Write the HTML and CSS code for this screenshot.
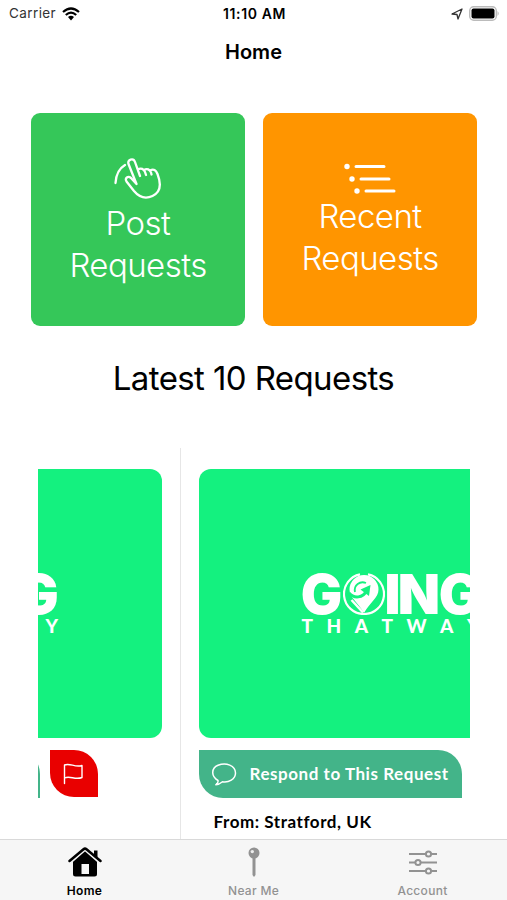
FILE: index.html
```html
<!DOCTYPE html>
<html lang="en">
<head>
<meta charset="utf-8">
<title>Home</title>
<link rel="stylesheet" href="styles.css">
</head>
<body>
<div class="app">
  <div class="status">
    <div class="status-left"><span class="carrier">Carrier</span>
      <svg class="wifi" width="18" height="14" viewBox="0 0 18 14" fill="none" stroke="#000" stroke-width="2.2"><path d="M1 5Q9-2 17 5M3.8 8Q9 3.3 14.2 8"/><path d="M6 10Q9 7.4 12 10L9 13.5Z" fill="#000" stroke="none"/></svg>
    </div>
    <div class="time">11:10 AM</div>
    <div class="status-right">
      <svg width="12" height="12" viewBox="0 0 12 12" fill="none" stroke="#333" stroke-width="1.3" stroke-linejoin="round"><path d="M1 6 11 1 7 11 6 6.5Z"/></svg>
      <svg width="31" height="15" viewBox="0 0 31 15"><rect x=".7" y=".7" width="26.6" height="13.6" rx="4" fill="#fff" stroke="#bbb" stroke-width="1.4"/><rect x="2.5" y="2.5" width="23" height="10" rx="2" fill="#000"/><path d="M28.5 5Q31 7.5 28.5 10Z" fill="#bbb"/></svg>
    </div>
  </div>
  <h1 class="title">Home</h1>
  <div class="tiles">
    <div class="tile post">
      <svg width="48" height="42" viewBox="0 0 48 42" fill="none" stroke="#fff" stroke-width="2.3" stroke-linecap="round" stroke-linejoin="round"><path d="M1.500 25C2 17 5 10.500 11 7M22.500 26 14.500 6C13 1.500 19.500-.5 21 4L26 18M23.700 11.500C27 9.500 30 11 31 14L32 17M30 12C33 10 36 11.500 37 14.500L37.500 16.500M36.300 12.300C39.500 10.500 42 12 43.500 16 47 25 47 34 38.500 38 31 41.500 25 39 20 33L12.500 23.500C10.500 20 14 17.500 17 20L22.500 26"/></svg>
      <span class="tile-text">Post<br>Requests</span>
    </div>
    <div class="tile recent">
      <svg width="52" height="32" viewBox="0 0 52 32" stroke="#fff" stroke-width="3" stroke-linecap="round"><path d="M12 3.500H40M17 16H45M22 28H50"/><g fill="#fff" stroke="none"><circle cx="3" cy="3.500" r="2.700"/><circle cx="8" cy="16" r="2.700"/><circle cx="13" cy="28" r="2.700"/></g></svg>
      <span class="tile-text">Recent<br>Requests</span>
    </div>
  </div>
  <h2 class="latest"><span>Latest 10 Requests</span></h2>
  <div class="carousel">
    <div class="track">
      <article class="item">
        <div class="card"><div class="logo">
          <div class="going"><span class="g">G</span><svg class="pin" viewBox="0 0 42 42"><use href="#mark"/></svg><span class="i">I</span><span class="n">N</span><span class="g">G</span></div>
          <div class="thatway"><span>T</span><span>H</span><span>A</span><span>T</span><span>W</span><span>A</span><span>Y</span></div>
        </div></div>
        <div class="actions"><div class="respond"></div>
          <div class="flag"><svg width="21" height="22" viewBox="0 0 21 22" fill="none" stroke="#fff" stroke-width="1.400" stroke-linecap="round" stroke-linejoin="round"><path d="M1.500 20.500V2C7-.5 12 5 19 2.500V14.500C12 17.500 7 12 1.500 15"/></svg></div>
        </div>
      </article>
      <article class="item next">
        <div class="card"><div class="logo">
          <div class="going"><span class="g">G</span><svg class="pin" viewBox="0 0 42 42"><g id="mark"><path d="M17 1.400A20 20 0 0 0 21 41 20 20 0 0 0 25 1.400" fill="none" stroke="#fff" stroke-width="2.200"/><path d="M21 2A14.500 14.500 0 0 0 6.500 16.500C6.500 25 15 29 21 40 27 29 35.500 25 35.500 16.500A14.500 14.500 0 0 0 21 2Z" fill="#fff"/><path d="M6 20C11 26 20 25 23.500 18" fill="none" stroke="#14f17f" stroke-width="3"/><path d="M17.500 16.500 27.500 12 26 23Z" fill="#14f17f"/><path d="M12 19C10.500 12 17 7.500 23 10" fill="none" stroke="#14f17f" stroke-width="1.800"/><path d="M8.500 27 20 39.500" stroke="#fff" stroke-width="2.500"/></g></svg><span class="i">I</span><span class="n">N</span><span class="g">G</span></div>
          <div class="thatway"><span>T</span><span>H</span><span>A</span><span>T</span><span>W</span><span>A</span><span>Y</span></div>
        </div></div>
        <div class="actions"><div class="respond">
          <svg width="25" height="23" viewBox="0 0 25 23" fill="none" stroke="#fff" stroke-width="1.500" stroke-linejoin="round"><path d="M6 17.500C-1.500 13-.5 5 6 2.300 14-1 23.500 2.500 23.500 10 23.500 16.500 16.500 19.800 10.500 18.800 8.500 20.500 6 21.800 3.800 21.800 5.500 20.500 6.300 19 6 17.500Z"/></svg>
          <span>Respond to This Request</span></div>
        </div>
        <p class="from">From: Stratford, UK</p>
      </article>
    </div>
  </div>
  <nav class="tabs">
    <div class="tab active">
      <svg width="34" height="30" viewBox="0 0 34 30"><path d="M5 13.500 17 3.500 29 13.500V27Q29 29.500 26.500 29.500H7.500Q5 29.500 5 27Z"/><path d="M1.500 14.500 15.500 2.300Q17 1 18.500 2.300L32.500 14.500" fill="none" stroke="#f6f6f6" stroke-width="5"/><path d="M1.500 14 15.500 2.300Q17 1 18.500 2.300L32.500 14" fill="none" stroke="#000" stroke-width="2.500" stroke-linecap="round"/><path d="M26 3.500H29.500V11.500L26 8.500Z"/><path d="M13.500 17H21V27H13.500Z" fill="#f6f6f6"/></svg>
      <span>Home</span>
    </div>
    <div class="tab">
      <svg width="14" height="30" viewBox="0 0 14 30" fill="#929292"><path d="M5.500 9H8.500V28L7 30 5.500 28Z"/><circle cx="7" cy="6" r="5.500"/><circle cx="5.300" cy="4.600" r="1.700" fill="#eee"/></svg>
      <span>Near Me</span>
    </div>
    <div class="tab">
      <svg width="28" height="30" viewBox="0 0 28 30" fill="#f6f6f6" stroke="#929292" stroke-width="2"><path d="M0 7H28M0 15.500H28M0 24H28"/><circle cx="19.500" cy="7" r="2.600"/><circle cx="9" cy="15.500" r="2.600"/><circle cx="19.500" cy="24" r="2.600"/></svg>
      <span>Account</span>
    </div>
  </nav>
</div>
</body>
</html>
```
FILE: styles.css
```css
* { box-sizing: border-box; }
body { margin: 0; background: #fff; color: #000; font-family: Inter, sans-serif; }
.app { width: 507px; height: 900px; overflow: hidden; display: flex; flex-direction: column; }
svg { display: block; flex: none; }
.status { height: 27px; display: grid; grid-template-columns: 1fr auto 1fr; align-items: center; padding: 0 7px 0 9px; font-size: 13.5px; line-height: 27px; }
.status-left, .status-right { display: flex; align-items: center; gap: 6px; }
.carrier { color: #333; letter-spacing: .4px; }
.status-right { justify-content: flex-end; }
.time { font-weight: 600; font-size: 14px; letter-spacing: .6px; }
.title { margin: 0; height: 86px; font-size: 20px; line-height: 50px; font-weight: 600; text-align: center; }
.tiles { display: flex; gap: 18px; padding-left: 31px; height: 213px; }
.tile { width: 214px; height: 213px; border-radius: 9px; display: flex; flex-direction: column; align-items: center; color: #fff; }
.post { background: #35c759; padding-top: 45px; }
.recent { background: #ff9500; padding-top: 50px; }
.tile-text { font-size: 33px; line-height: 42px; font-weight: 350; letter-spacing: -.55px; text-align: center; }
.post .tile-text { margin-top: 2px; }
.latest { margin: 0; height: 122px; padding-top: 31px; font-size: 33px; line-height: 42px; font-weight: 400; text-align: center; letter-spacing: -.6px; white-space: nowrap; }
.carousel { margin-left: 38px; width: 432px; height: 391px; overflow: hidden; }
.track { display: flex; width: 842px; margin-left: -279.5px; }
.item { width: 421px; height: 391px; padding: 21px 18px 0; flex: none; }
.next { border-left: 1px solid #e6e6e6; padding-left: 18px; }
.card { height: 269px; border-radius: 12px; background: #14f17f; display: flex; justify-content: center; }
.logo { width: 178px; margin-top: 104px; color: #fff; }
.going { display: flex; height: 42px; align-items: center; justify-content: space-between; font: 900 55px/42px Inter, sans-serif; }
.pin { width: 42px; height: 42px; }
.g { width: 40px; display: flex; justify-content: center; }
.i { width: 12px; display: flex; justify-content: center; }
.n { width: 38px; display: flex; justify-content: center; }
.thatway { display: flex; justify-content: space-between; height: 20px; margin-top: 1px; font: 900 19px/20px Lato, sans-serif; }
.actions { display: flex; gap: 10px; margin-top: 12px; }
.respond { width: 263px; height: 48px; border-radius: 0 24px 0 24px; background: #43b489; display: flex; align-items: center; padding-left: 13px; gap: 13px; color: #fff; font: 700 17px/48px Lato, sans-serif; letter-spacing: .55px; white-space: nowrap; }
.flag { width: 48.5px; height: 47px; border-radius: 0 24px 0 24px; background: #e90000; display: flex; justify-content: center; align-items: center; }
.from { margin: 12px 0 0 15px; font: 700 17px/24px Lato, sans-serif; letter-spacing: .55px; }
.tabs { height: 61px; background: #f6f6f6; border-top: 1px solid #d9d9d9; display: grid; grid-template-columns: repeat(3, 1fr); }
.tab { display: flex; flex-direction: column; align-items: center; padding-top: 7px; color: #929292; font-size: 12px; line-height: 16px; font-weight: 500; gap: 6px; letter-spacing: .3px; }
.active { color: #000; font-weight: 600; }
```
